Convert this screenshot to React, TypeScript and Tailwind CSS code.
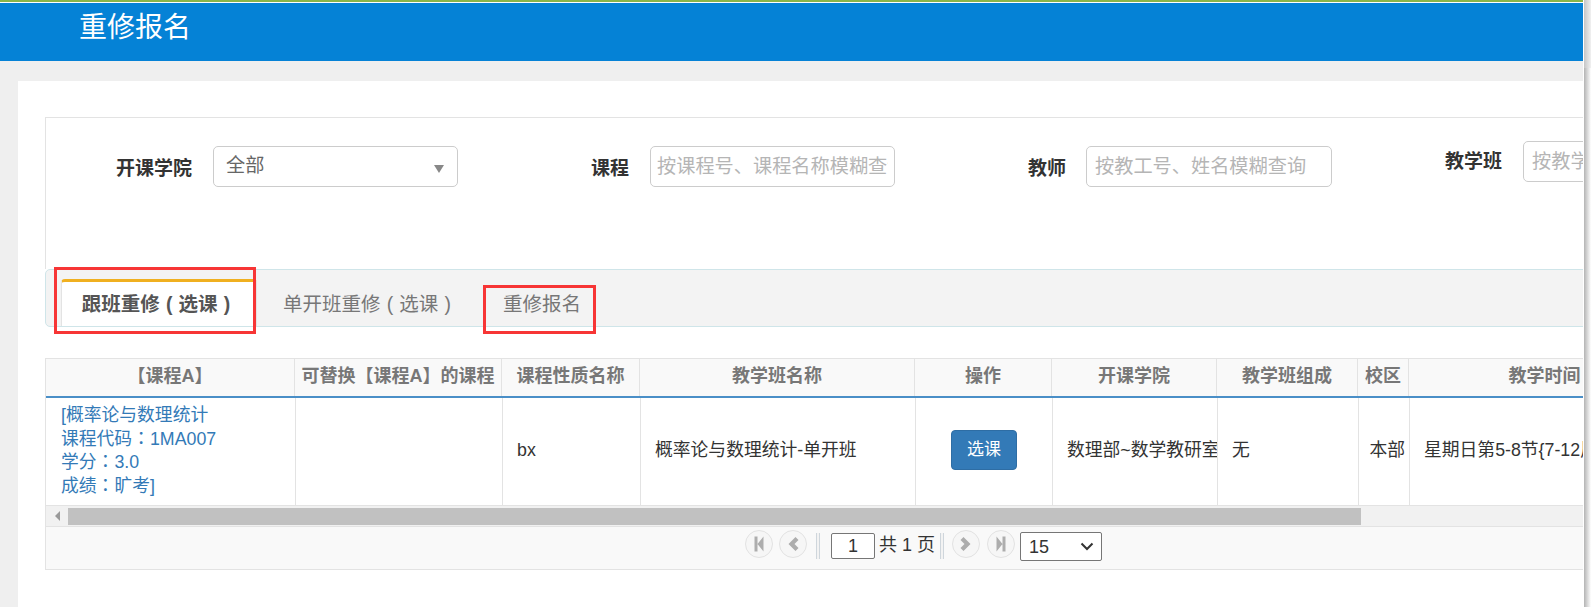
const cols = [249, 207, 138, 275, 137, 165, 141, 51, 272];
const heads = ["【课程A】", "可替换【课程A】的课程", "课程性质名称", "教学班名称", "操作", "开课学院", "教学班组成", "校区", "教学时间"];

function PageBtn({ d, className }: { d: string; className: string }) {
  return (
    <div className={`flex h-[28px] w-[28px] shrink-0 items-center justify-center rounded-full border border-[#e2e2e2] bg-[#f6f6f6] ${className}`}>
      <svg width="14" height="16" viewBox="0 0 14 16" fill="#adadad"><path d={d} /></svg>
    </div>
  );
}

function Sep({ className }: { className: string }) {
  return <div className={`h-[26px] w-[4px] shrink-0 border-x border-[#cfd6dc] bg-[#f3f3f3] ${className}`} />;
}

function Colon() {
  return <span className="font-['Noto_Sans_CJK_TC'] leading-[0]">：</span>;
}

export default function App() {
  return (
    <div className="flex h-[607px] w-[1591px] overflow-hidden bg-white font-['Liberation_Sans','Noto_Sans_CJK_SC',sans-serif]">
      <div className="w-[1583px] shrink-0 overflow-hidden">
        <div className="h-[2px] bg-[#8ab54a]" />
        <div className="h-[1px] bg-white" />
        <div className="h-[58px] bg-[#0582d6] pl-[79px] text-[28px] leading-[50px] text-white">重修报名</div>
        <div className="bg-[#efefef] pl-[18px] pt-[20px]">
          <div className="h-[526px] bg-white pl-[27px] pt-[36px]">
            <div className="h-[152px] w-[1600px] border-l border-t border-[#e3e3e3]">
              <div className="flex items-start whitespace-nowrap pt-[28px] text-[19.2px]">
                <div className="w-[146px] shrink-0 pt-[10px] text-right text-[19px] font-bold leading-[26px] text-[#333]">开课学院</div>
                <div className="ml-[21px] flex h-[41px] w-[245px] shrink-0 items-center justify-between rounded-[5px] border border-[#ccc] pl-[12px] pr-[13px] text-[#666]">
                  <span>全部</span>
                  <span className="mt-[4px] h-0 w-0 border-x-[5px] border-t-[8px] border-x-transparent border-t-[#888]" />
                </div>
                <div className="ml-[133px] shrink-0 pt-[10px] text-[19px] font-bold leading-[26px] text-[#333]">课程</div>
                <div className="ml-[21px] flex h-[41px] w-[245px] shrink-0 items-center rounded-[5px] border border-[#ccc] pl-[6px] pt-[1px] text-[#b5b5b5]">
                  <span className="block w-[231px] overflow-hidden">按课程号、课程名称模糊查询</span>
                </div>
                <div className="ml-[133px] shrink-0 pt-[10px] text-[19px] font-bold leading-[26px] text-[#333]">教师</div>
                <div className="ml-[20px] flex h-[41px] w-[246px] shrink-0 items-center overflow-hidden rounded-[5px] border border-[#ccc] pl-[8px] pt-[1px] text-[#b5b5b5]">按教工号、姓名模糊查询</div>
                <div className="ml-[113px] mt-[-7px] shrink-0 pt-[10px] text-[19px] font-bold leading-[26px] text-[#333]">教学班</div>
                <div className="ml-[21px] mt-[-5px] flex h-[41px] w-[245px] shrink-0 items-center overflow-hidden rounded-[5px] border border-[#ccc] pl-[8px] pt-[1px] text-[#b5b5b5]">按教学班名称模糊查询</div>
              </div>
            </div>
            <div className="relative flex h-[58px] w-[1600px] items-end rounded-l-[5px] border border-[#cfe5e9] bg-[#f3f3f3] pl-[15px] text-[19.5px] [word-spacing:0.75px]">
              <div className="flex h-[47px] w-[196px] shrink-0 items-center justify-center whitespace-pre rounded-t-[4px] border-x border-t-[3px] border-[#e3e3e3] border-t-[#f0b020] bg-white pr-[6px] pt-[1px] font-bold text-[#555]">跟班重修 ( 选课 )</div>
              <div className="ml-[26px] flex h-[47px] shrink-0 items-center whitespace-pre pt-[4px] text-[#777]">单开班重修 ( 选课 )</div>
              <div className="ml-[52px] flex h-[47px] shrink-0 items-center whitespace-pre pt-[4px] text-[#777]">重修报名</div>
              <div className="absolute left-[8px] top-[-3px] h-[67px] w-[202px] border-[3px] border-[#f73535]" />
              <div className="absolute left-[437px] top-[15px] h-[49px] w-[113px] border-[3px] border-[#f73535]" />
            </div>
            <div className="mt-[31px] h-[212px] w-[1538px] overflow-hidden border-y border-l border-[#e3e3e3]">
              <div className="flex h-[39px] border-b-2 border-[#4a8fc7] bg-[#f9f9f9]">
                {heads.map((h, i) => (
                  <div key={h} style={{ width: cols[i] }} className="flex shrink-0 items-center justify-center whitespace-nowrap border-r border-[#e3e3e3] pb-[2px] text-[18px] font-bold text-[#777]">{h}</div>
                ))}
              </div>
              <div className="flex h-[107px] pl-[1px] text-[17.8px] text-[#333]">
                <div style={{ width: cols[0] }} className="shrink-0 border-r border-[#e3e3e3] pl-[14px] pt-[6px] leading-[23.7px] text-[#337ab7]">
                  <div>[概率论与数理统计</div><div>课程代码<Colon />1MA007</div><div>学分<Colon />3.0</div><div>成绩<Colon />旷考]</div>
                </div>
                <div style={{ width: cols[1] }} className="shrink-0 border-r border-[#e3e3e3]" />
                <div style={{ width: cols[2] }} className="flex shrink-0 items-center border-r border-[#e3e3e3] pb-[2px] pl-[14px]">bx</div>
                <div style={{ width: cols[3] }} className="flex shrink-0 items-center border-r border-[#e3e3e3] pb-[2px] pl-[14px]">概率论与数理统计-单开班</div>
                <div style={{ width: cols[4] }} className="flex shrink-0 items-center justify-center border-r border-[#e3e3e3] pb-[3px]">
                  <div className="flex h-[40px] w-[66px] items-center justify-center rounded-[4px] border border-[#2e6da4] bg-[#337ab7] text-[17px] text-white">选课</div>
                </div>
                <div style={{ width: cols[5] }} className="flex shrink-0 items-center overflow-hidden whitespace-nowrap border-r border-[#e3e3e3] pb-[2px] pl-[14px]">数理部~数学教研室</div>
                <div style={{ width: cols[6] }} className="flex shrink-0 items-center border-r border-[#e3e3e3] pb-[2px] pl-[14px]">无</div>
                <div style={{ width: cols[7] }} className="flex shrink-0 items-center justify-end overflow-hidden border-r border-[#e3e3e3] pb-[2px] pr-[4px]">本部</div>
                <div style={{ width: cols[8] }} className="flex shrink-0 items-center overflow-hidden whitespace-nowrap pb-[2px] pl-[14px]">星期日第5-8节{"{"}7-12周{"}"}</div>
              </div>
              <div className="flex h-[22px] items-center border-y border-[#e3e3e3] bg-[#f1f1f1]">
                <div className="flex w-[22px] justify-center">
                  <span className="h-0 w-0 border-y-[5px] border-r-[5px] border-y-transparent border-r-[#999]" />
                </div>
                <div className="h-[17px] w-[1293px] bg-[#c1c1c1]" />
              </div>
              <div className="flex h-[44px] items-start bg-[#f9f9f9] pl-[699px] pt-[5px] text-[18px] leading-[26px] text-[#333]">
                <PageBtn className="-mt-[2px]" d="M2.500.5h3v15h-3zM11.500.5v15l-6-7.500z" />
                <PageBtn className="-mt-[2px] ml-[6px]" d="M9.500 1l3 3-4 4 4 4-3 3-7-7z" />
                <Sep className="ml-[9px] mt-[1px]" />
                <div className="ml-[11px] mt-[1px] flex h-[26px] w-[44px] shrink-0 items-center justify-center rounded-[2px] border border-[#767676] bg-white">1</div>
                <span className="ml-[4px] whitespace-pre">共 1 页</span>
                <Sep className="ml-[5px] mt-[1px]" />
                <PageBtn className="-mt-[2px] ml-[8px]" d="M4.500 1l-3 3 4 4-4 4 3 3 7-7z" />
                <PageBtn className="-mt-[2px] ml-[7px]" d="M2.500.5v15l6-7.500zM8.500.5h3v15h-3z" />
                <div className="ml-[5px] flex h-[29px] w-[82px] shrink-0 items-center justify-between rounded-[2px] border border-[#767676] bg-white pl-[8px] pr-[7px]">
                  <span>15</span>
                  <svg width="14" height="9" viewBox="0 0 14 9" fill="none" stroke="#333" strokeWidth="2"><path d="M1.500 1.500L7 7l5.500-5.500" /></svg>
                </div>
              </div>
            </div>
          </div>
        </div>
      </div>
      <div className="flex-1 pl-[1px]">
        <div className="h-[68px] bg-linear-to-r from-[#c6c6c6] to-[#f1f1f1]" />
        <div className="h-[539px] bg-linear-to-r from-[#b4b4b4] to-white" />
      </div>
    </div>
  );
}
